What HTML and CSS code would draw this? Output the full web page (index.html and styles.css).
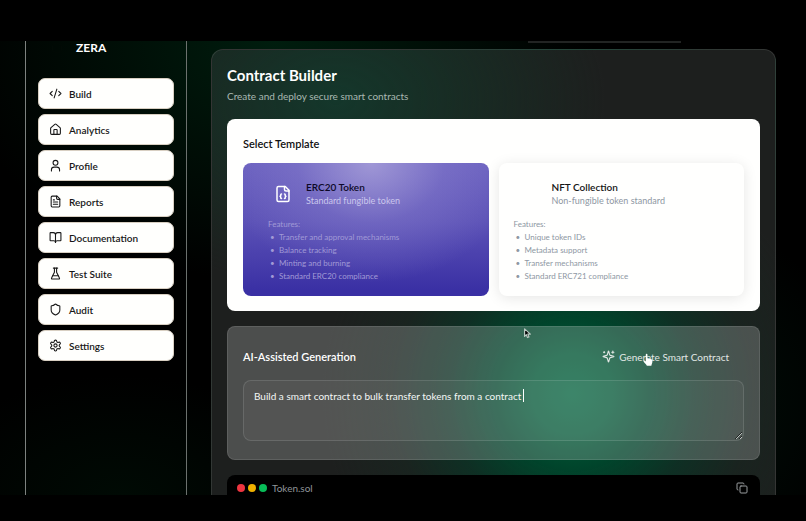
FILE: index.html
```html
<!DOCTYPE html>
<html lang="en">
<head>
    <meta charset="UTF-8">
    <meta name="viewport" content="width=device-width, initial-scale=1.0">
    <title>ZERA - Contract Builder</title>
    <link rel="stylesheet" href="styles.css">
</head>
<body>
    <div class="app">
        <aside class="sidebar">
            <div class="brand">
                <svg class="brand-logo" viewBox="0 0 24 24"><path d="M12 2l9 5v10l-9 5-9-5V7z"/></svg>
                <span>ZERA</span>
            </div>
            <nav class="nav">
                <a class="nav-item" href="#build">
                    <svg class="icon" viewBox="0 0 24 24"><path d="m18 16 4-4-4-4"/><path d="m6 8-4 4 4 4"/><path d="m14.5 4-5 16"/></svg>
                    Build
                </a>
                <a class="nav-item" href="#analytics">
                    <svg class="icon" viewBox="0 0 24 24"><path d="M15 21v-8a1 1 0 0 0-1-1h-4a1 1 0 0 0-1 1v8"/><path d="M3 10a2 2 0 0 1 .7-1.5l7-6a2 2 0 0 1 2.6 0l7 6A2 2 0 0 1 21 10v9a2 2 0 0 1-2 2H5a2 2 0 0 1-2-2z"/></svg>
                    Analytics
                </a>
                <a class="nav-item" href="#profile">
                    <svg class="icon" viewBox="0 0 24 24"><circle cx="12" cy="7" r="4.5"/><path d="M4.5 22v-2a5 5 0 0 1 5-5h5a5 5 0 0 1 5 5v2"/></svg>
                    Profile
                </a>
                <a class="nav-item" href="#reports">
                    <svg class="icon" viewBox="0 0 24 24"><path d="M15 2H6a2 2 0 0 0-2 2v16a2 2 0 0 0 2 2h12a2 2 0 0 0 2-2V7z"/><path d="M14 2v4a2 2 0 0 0 2 2h4"/><path d="M10 9H8"/><path d="M16 13H8"/><path d="M16 17H8"/></svg>
                    Reports
                </a>
                <a class="nav-item" href="#docs">
                    <svg class="icon" viewBox="0 0 24 24"><path d="M12 7v14"/><path d="M3 18a1 1 0 0 1-1-1V4a1 1 0 0 1 1-1h5a4 4 0 0 1 4 4 4 4 0 0 1 4-4h5a1 1 0 0 1 1 1v13a1 1 0 0 1-1 1h-6a3 3 0 0 0-3 3 3 3 0 0 0-3-3z"/></svg>
                    Documentation
                </a>
                <a class="nav-item" href="#tests">
                    <svg class="icon" viewBox="0 0 24 24"><path d="M10 2v7.5L4.7 20.5A1 1 0 0 0 5.6 22h12.8a1 1 0 0 0 .9-1.5L14 9.5V2"/><path d="M8 2h8"/><path d="M7 16h10"/></svg>
                    Test Suite
                </a>
                <a class="nav-item" href="#audit">
                    <svg class="icon" viewBox="0 0 24 24"><path d="M20 13c0 5-3.5 7.5-7.66 8.95a1 1 0 0 1-.67-.01C7.5 20.5 4 18 4 13V6a1 1 0 0 1 1-1c2 0 4.5-1.2 6.24-2.72a1.17 1.17 0 0 1 1.52 0C14.51 3.81 17 5 19 5a1 1 0 0 1 1 1z"/></svg>
                    Audit
                </a>
                <a class="nav-item" href="#settings">
                    <svg class="icon" viewBox="0 0 24 24"><path d="M12.22 2h-.44a2 2 0 0 0-2 2v.18a2 2 0 0 1-1 1.73l-.43.25a2 2 0 0 1-2 0l-.15-.08a2 2 0 0 0-2.73.73l-.22.38a2 2 0 0 0 .73 2.73l.15.1a2 2 0 0 1 1 1.72v.51a2 2 0 0 1-1 1.74l-.15.09a2 2 0 0 0-.73 2.73l.22.38a2 2 0 0 0 2.73.73l.15-.08a2 2 0 0 1 2 0l.43.25a2 2 0 0 1 1 1.73V20a2 2 0 0 0 2 2h.44a2 2 0 0 0 2-2v-.18a2 2 0 0 1 1-1.73l.43-.25a2 2 0 0 1 2 0l.15.08a2 2 0 0 0 2.73-.73l.22-.39a2 2 0 0 0-.73-2.73l-.15-.08a2 2 0 0 1-1-1.74v-.5a2 2 0 0 1 1-1.74l.15-.09a2 2 0 0 0 .73-2.73l-.22-.38a2 2 0 0 0-2.73-.73l-.15.08a2 2 0 0 1-2 0l-.43-.25a2 2 0 0 1-1-1.73V4a2 2 0 0 0-2-2z"/><circle cx="12" cy="12" r="3"/></svg>
                    Settings
                </a>
            </nav>
        </aside>

        <main class="main">
            <div class="topbar"></div>
            <section class="builder">
                <header class="builder-header">
                    <h1>Contract Builder</h1>
                    <p>Create and deploy secure smart contracts</p>
                </header>

                <section class="card templates">
                    <h2>Select Template</h2>
                    <div class="template-grid">
                        <article class="template selected">
                            <div class="template-head">
                                <svg class="template-icon" viewBox="0 0 24 24"><path d="M15 2H6a2 2 0 0 0-2 2v16a2 2 0 0 0 2 2h12a2 2 0 0 0 2-2V7z"/><path d="M14 2v4a2 2 0 0 0 2 2h4"/><path d="M10 12a1 1 0 0 0-1 1v1a1 1 0 0 1-1 1 1 1 0 0 1 1 1v1a1 1 0 0 0 1 1"/><path d="M14 18a1 1 0 0 0 1-1v-1a1 1 0 0 1 1-1 1 1 0 0 1-1-1v-1a1 1 0 0 0-1-1"/></svg>
                                <div>
                                    <h3>ERC20 Token</h3>
                                    <p>Standard fungible token</p>
                                </div>
                            </div>
                            <div class="features">
                                <p>Features:</p>
                                <ul>
                                    <li>Transfer and approval mechanisms</li>
                                    <li>Balance tracking</li>
                                    <li>Minting and burning</li>
                                    <li>Standard ERC20 compliance</li>
                                </ul>
                            </div>
                        </article>
                        <article class="template">
                            <div class="template-head">
                                <span class="template-icon"></span>
                                <div>
                                    <h3>NFT Collection</h3>
                                    <p>Non-fungible token standard</p>
                                </div>
                            </div>
                            <div class="features">
                                <p>Features:</p>
                                <ul>
                                    <li>Unique token IDs</li>
                                    <li>Metadata support</li>
                                    <li>Transfer mechanisms</li>
                                    <li>Standard ERC721 compliance</li>
                                </ul>
                            </div>
                        </article>
                    </div>
                </section>

                <section class="card generator">
                    <div class="generator-head">
                        <h2><label for="prompt">AI-Assisted Generation</label></h2>
                        <button class="generate" type="button">
                            <svg class="icon" viewBox="0 0 24 24"><path d="M9.94 15.5A2 2 0 0 0 8.5 14.06l-6.13-1.58a.5.5 0 0 1 0-.96L8.5 9.94A2 2 0 0 0 9.94 8.5l1.58-6.13a.5.5 0 0 1 .96 0L14.06 8.5A2 2 0 0 0 15.5 9.94l6.13 1.58a.5.5 0 0 1 0 .96L15.5 14.06a2 2 0 0 0-1.44 1.44l-1.58 6.13a.5.5 0 0 1-.96 0z"/><path d="M20 2v4"/><path d="M22 4h-4"/><path d="M4 3v2"/><path d="M5 4H3"/></svg>
                            Generate Smart Contract
                        </button>
                    </div>
                    <div class="prompt-box">
                        <textarea id="prompt" spellcheck="false">Build a smart contract to bulk transfer tokens from a contract</textarea>
                        <span class="caret"></span>
                    </div>
                </section>

                <section class="editor">
                    <span class="dot red"></span>
                    <span class="dot yellow"></span>
                    <span class="dot green"></span>
                    <span class="filename">Token.sol</span>
                    <button class="copy" type="button" aria-label="Copy code">
                        <svg viewBox="0 0 24 24"><rect x="8" y="8" width="14" height="14" rx="2"/><path d="M4 16a2 2 0 0 1-2-2V4a2 2 0 0 1 2-2h10a2 2 0 0 1 2 2"/></svg>
                    </button>
                </section>
            </section>
        </main>
    </div>

    <svg class="cursor arrow" viewBox="0 0 12 18"><path d="M1 1v13l3-3 2 5 2.5-1-2-5H11z"/></svg>
    <svg class="cursor hand" viewBox="0 0 18 24"><path d="M5 2c0-1.5 3-1.5 3 0v7l7 1.5c1.5.5 2 1.5 2 3 0 4-1 5-2 9H7c-1-3-4-5-6-8-.5-1.5 1.5-2.5 4 0z"/></svg>
</body>
</html>
```

FILE: styles.css
```css
* {
    margin: 0;
    padding: 0;
    box-sizing: border-box;
}

body {
    font-family: Lato, 'Open Sans', sans-serif;
    font-size: 10px;
    background: #000;
    color: #fff;
    height: 100vh;
    padding: 41px 0 26px;
    overflow: hidden;
}

svg {
    fill: none;
    stroke: currentColor;
    stroke-width: 2;
    stroke-linecap: round;
    stroke-linejoin: round;
    flex-shrink: 0;
}

.app {
    display: flex;
    height: 100%;
    padding-left: 25px;
    overflow: hidden;
    background:
        radial-gradient(ellipse 320px 240px at 34% 0, #001d0e 0, rgba(0, 20, 9, 0.7) 50%, transparent 100%),
        radial-gradient(ellipse 200px 120px at 15% 100%, #000a04 0, transparent 100%),
        radial-gradient(ellipse 240px 200px at 78% 80%, #00120a 0, transparent 100%),
        #000;
}

/* Sidebar */
.sidebar {
    width: 162px;
    flex-shrink: 0;
    padding: 0 12px;
    border-left: 1px solid #7d827f;
    border-right: 1px solid #6c716e;
}

.brand {
    display: flex;
    align-items: center;
    gap: 13px;
    height: 37px;
    padding: 0 0 23px 13px;
    font-size: 12px;
    line-height: 14px;
    font-weight: 700;
}

.brand-logo {
    width: 12px;
    height: 14px;
    color: #020a05;
}

.nav {
    display: flex;
    flex-direction: column;
    gap: 5px;
}

.nav-item {
    display: flex;
    align-items: center;
    gap: 7px;
    height: 31px;
    padding: 0 10px;
    border: 1px solid #d8cfc2;
    border-radius: 7px;
    background: #fffffd;
    color: #181818;
    font-weight: 600;
    text-decoration: none;
}

.icon {
    width: 13px;
    height: 13px;
}

/* Main */
.main {
    flex: 1;
    min-width: 0;
    padding: 0 30px 0 24px;
}

.topbar {
    width: 153px;
    height: 2px;
    margin: 0 95px 6px auto;
    background: #222423;
}

.builder {
    padding: 15px;
    border: 1px solid rgba(255, 255, 255, 0.1);
    border-radius: 12px 12px 0 0;
    background:
        radial-gradient(circle at 64% 344px, #005f3b 0, #005534 40px, #00442b 75px, rgba(8, 54, 38, 0.7) 125px, rgba(20, 42, 33, 0.4) 180px, transparent 250px),
        radial-gradient(ellipse 270px 190px at 22% 50px, #14372b 0, rgba(22, 49, 38, 0.7) 45%, transparent 100%),
        #1d1f1e;
}

.builder-header {
    height: 54px;
}

.builder h1 {
    font-size: 15px;
    line-height: 21px;
    font-weight: 700;
}

.builder-header p {
    line-height: 20px;
    color: #a9b8b2;
}

.builder h2 {
    font-size: 11px;
    line-height: 18px;
    font-weight: 600;
}

.card {
    margin-bottom: 15px;
    padding: 15px;
    border: 1px solid transparent;
    border-radius: 8px;
}

.templates {
    padding-bottom: 14px;
    background: #fffffe;
    color: #111;
}

.template-grid {
    display: grid;
    grid-template-columns: 1fr 1fr;
    gap: 10px;
    margin-top: 10px;
}

.template {
    height: 133px;
    padding: 15px;
    border-radius: 8px;
    background: #fffffe;
    box-shadow: 0 2px 14px rgba(0, 0, 0, 0.1);
    color: #8e97a3;
}

.template.selected {
    padding: 15px 25px;
    background:
        radial-gradient(ellipse 60% 90% at 52% 0, rgba(165, 157, 216, 0.9) 0, rgba(140, 131, 207, 0.4) 50%, transparent 100%),
        linear-gradient(180deg, #6a60bf 0, #5b51b6 45%, #3a30a4 95%);
    box-shadow: none;
    color: #a19ad6;
}

.template-head {
    display: flex;
    align-items: center;
    gap: 14px;
    height: 32px;
    padding-left: 6px;
}

.template-icon {
    width: 18px;
    height: 18px;
    color: #fff;
}

.template h3 {
    font-size: 10px;
    line-height: 14px;
    font-weight: 600;
    color: #151515;
}

.template.selected h3 {
    color: #0c0827;
}

.template-head p {
    font-size: 9px;
    line-height: 14px;
}

.template.selected .template-head p {
    color: #cbc7ed;
}

.features {
    margin-top: 8px;
    font-size: 8px;
    line-height: 13px;
}

.features ul {
    list-style: none;
}

.features li::before {
    content: '•';
    display: inline-block;
    width: 9px;
    padding-left: 2px;
}

.generator {
    padding-bottom: 18px;
    background: rgba(255, 255, 255, 0.21);
    border-color: rgba(255, 255, 255, 0.1);
}

.generator-head {
    display: flex;
    align-items: center;
    justify-content: space-between;
    height: 29px;
    margin-bottom: 9px;
}

.generate {
    display: flex;
    align-items: center;
    gap: 4px;
    padding: 0 15px;
    border: 0;
    background: none;
    color: #e2e8e5;
    font: inherit;
}

.prompt-box {
    position: relative;
}

.prompt-box textarea {
    display: block;
    width: 100%;
    height: 61px;
    padding: 7px 10px;
    border: 1px solid rgba(255, 255, 255, 0.12);
    border-radius: 8px;
    outline: none;
    background: rgba(255, 255, 255, 0.04);
    color: #f3f7f5;
    font: inherit;
    line-height: 16px;
    resize: vertical;
}

.caret {
    position: absolute;
    left: 280px;
    top: 9px;
    width: 1px;
    height: 13px;
    background: #fff;
}

/* Code editor */
.editor {
    display: flex;
    align-items: center;
    gap: 3px;
    height: 26px;
    padding: 0 12px 0 10px;
    border-radius: 8px 8px 0 0;
    background: #000;
}

.dot {
    width: 8px;
    height: 8px;
    border-radius: 50%;
}

.red {
    background: #ee3540;
}

.yellow {
    background: #efb100;
}

.green {
    background: #08bd58;
}

.filename {
    margin-left: 2px;
    color: #8f9499;
}

.copy {
    margin-left: auto;
    border: 0;
    background: none;
    color: #999d9f;
}

.copy svg {
    display: block;
    width: 12px;
    height: 12px;
}

/* Mouse pointers */
.cursor {
    position: absolute;
    pointer-events: none;
}

.arrow {
    left: 524px;
    top: 328px;
    width: 7px;
    height: 11px;
    fill: #000;
    stroke: #b9c9c2;
}

.hand {
    left: 643px;
    top: 353px;
    width: 10px;
    height: 14px;
    fill: #fff;
    stroke: none;
}
```
